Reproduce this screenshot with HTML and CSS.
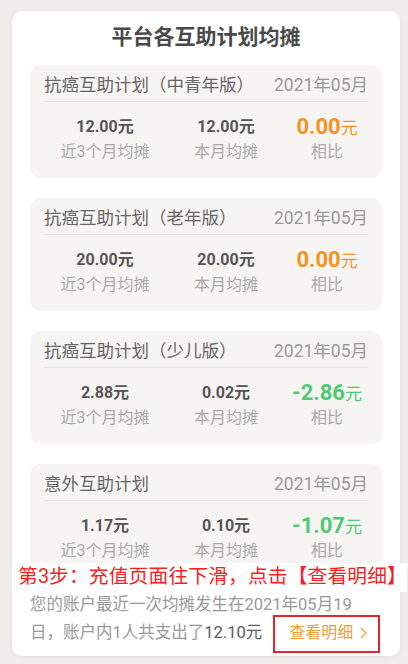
FILE: index.html
```html
<!DOCTYPE html>
<html lang="zh-CN">
<head>
    <meta charset="UTF-8">
    <meta name="viewport" content="width=device-width, initial-scale=1.0">
    <title>平台各互助计划均摊</title>
    <link rel="stylesheet" href="styles.css">
</head>
<body>
    <div class="panel">
        <h1 class="panel-title">平台各互助计划均摊</h1>

        <div class="plan">
            <div class="plan-head">
                <span class="plan-name">抗癌互助计划（中青年版）</span>
                <span class="plan-date">2021年05月</span>
            </div>
            <div class="plan-stats">
                <div class="stat">
                    <div class="stat-value">12.00元</div>
                    <div class="stat-label">近3个月均摊</div>
                </div>
                <div class="stat">
                    <div class="stat-value">12.00元</div>
                    <div class="stat-label">本月均摊</div>
                </div>
                <div class="stat">
                    <div class="stat-value diff up"><b>0.00</b>元</div>
                    <div class="stat-label">相比</div>
                </div>
            </div>
        </div>

        <div class="plan">
            <div class="plan-head">
                <span class="plan-name">抗癌互助计划（老年版）</span>
                <span class="plan-date">2021年05月</span>
            </div>
            <div class="plan-stats">
                <div class="stat">
                    <div class="stat-value">20.00元</div>
                    <div class="stat-label">近3个月均摊</div>
                </div>
                <div class="stat">
                    <div class="stat-value">20.00元</div>
                    <div class="stat-label">本月均摊</div>
                </div>
                <div class="stat">
                    <div class="stat-value diff up"><b>0.00</b>元</div>
                    <div class="stat-label">相比</div>
                </div>
            </div>
        </div>

        <div class="plan">
            <div class="plan-head">
                <span class="plan-name">抗癌互助计划（少儿版）</span>
                <span class="plan-date">2021年05月</span>
            </div>
            <div class="plan-stats">
                <div class="stat">
                    <div class="stat-value">2.88元</div>
                    <div class="stat-label">近3个月均摊</div>
                </div>
                <div class="stat">
                    <div class="stat-value">0.02元</div>
                    <div class="stat-label">本月均摊</div>
                </div>
                <div class="stat">
                    <div class="stat-value diff down"><b>-2.86</b>元</div>
                    <div class="stat-label">相比</div>
                </div>
            </div>
        </div>

        <div class="plan">
            <div class="plan-head">
                <span class="plan-name">意外互助计划</span>
                <span class="plan-date">2021年05月</span>
            </div>
            <div class="plan-stats">
                <div class="stat">
                    <div class="stat-value">1.17元</div>
                    <div class="stat-label">近3个月均摊</div>
                </div>
                <div class="stat">
                    <div class="stat-value">0.10元</div>
                    <div class="stat-label">本月均摊</div>
                </div>
                <div class="stat">
                    <div class="stat-value diff down"><b>-1.07</b>元</div>
                    <div class="stat-label">相比</div>
                </div>
            </div>
        </div>

        <p class="summary">您的账户最近一次均摊发生在2021年05月19日，账户内1人共支出了<span class="summary-sum">12.10元</span><a class="detail-link" href="#">查看明细<svg class="chevron" width="7" height="12" viewBox="0 0 7 12"><path d="M1 1l5 5-5 5" fill="none" stroke="currentColor" stroke-width="1.3"/></svg></a></p>

        <!-- tutorial annotation over the screenshot -->
        <div class="step-note">第3步：充值页面往下滑，点击【查看明细】</div>
    </div>
</body>
</html>
```

FILE: styles.css
```css
body {
    margin: 0;
    padding: 11px 8px 8px 12px;
    background: #efeeea;
    font-family: Roboto, "Noto Sans CJK SC", sans-serif;
}

.panel {
    position: relative;
    width: 352px;
    padding: 11px 18px 9px;
    background: #fff;
    border-radius: 10px;
    box-shadow: 0 1px 6px rgba(0, 0, 0, 0.06);
}

.panel-title {
    margin: 0 0 13px;
    font-size: 21px;
    line-height: 30px;
    font-weight: bold;
    color: #4a4a4a;
    text-align: center;
}

.plan {
    padding: 0 14px;
    background: #f6f5f3;
    border-radius: 10px;
}

.plan + .plan {
    margin-top: 20px;
}

.plan-head {
    display: flex;
    justify-content: space-between;
    align-items: center;
    height: 36px;
    border-bottom: 1px solid #e6e5e2;
    font-size: 17.5px;
}

.plan-name {
    color: #666;
}

.plan-date {
    color: #999;
}

.plan-stats {
    display: grid;
    grid-template-columns: 122px 120px 1fr;
    padding: 13px 0;
    text-align: center;
}

.stat-value {
    height: 24px;
    line-height: 24px;
    font-size: 16px;
    font-weight: bold;
    color: #555;
}

.stat-label {
    line-height: 26px;
    font-size: 16px;
    color: #aaa;
}

.diff {
    font-size: 17px;
    font-weight: normal;
}

.diff b {
    font-size: 22px;
    font-weight: bold;
}

.diff.up {
    color: #f7921e;
}

.diff.down {
    color: #4fca72;
}

.summary {
    width: 330px;
    margin: 14px 0 0;
    font-size: 16.5px;
    line-height: 28px;
    color: #999;
}

.summary-sum {
    color: #5c5c5c;
}

.detail-link {
    position: relative;
    display: inline-block;
    margin-left: 27px;
    margin-right: -60px;
    font-size: 16px;
    color: #eea03a;
    text-decoration: none;
    white-space: nowrap;
}

.chevron {
    margin-left: 7px;
    vertical-align: -1px;
}

.detail-link::after {
    content: "";
    position: absolute;
    top: -4px;
    bottom: -6px;
    left: -16px;
    right: -13px;
    border: 2px solid #e3262a;
}

.step-note {
    position: absolute;
    left: 6px;
    top: 552px;
    padding: 1px 0 2px;
    background: #fff;
    font-size: 19.8px;
    letter-spacing: 0.1px;
    line-height: 26px;
    color: #f81e1e;
    white-space: nowrap;
}
```
